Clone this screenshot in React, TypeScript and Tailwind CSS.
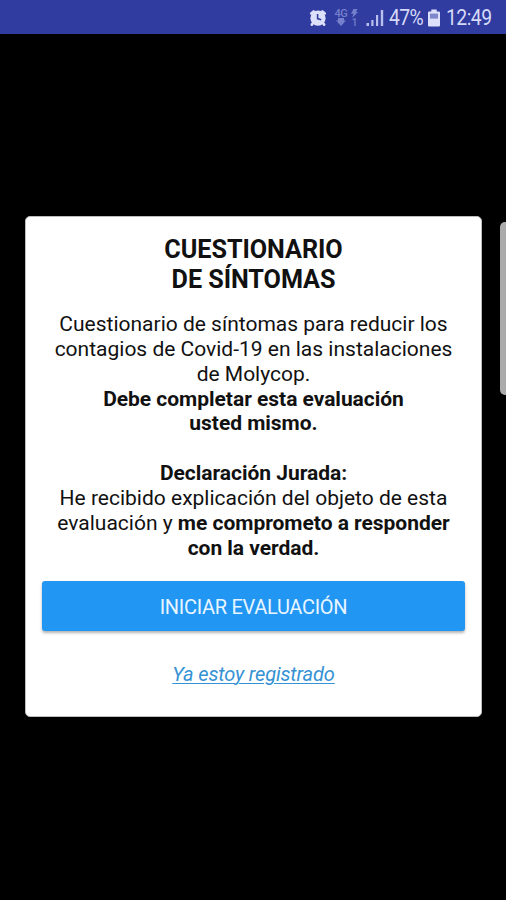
type Line = { regular?: string; bold?: string };

const INTRO: Line[] = [
  { regular: "Cuestionario de síntomas para reducir los" },
  { regular: "contagios de Covid-19 en las instalaciones" },
  { regular: "de Molycop." },
  { bold: "Debe completar esta evaluación" },
  { bold: "usted mismo." },
];

const STATEMENT: Line[] = [
  { bold: "Declaración Jurada:" },
  { regular: "He recibido explicación del objeto de esta" },
  { regular: "evaluación y ", bold: "me comprometo a responder" },
  { bold: "con la verdad." },
];

function Paragraph({ lines }: { lines: Line[] }) {
  return (
    <p className="text-[21px] leading-[24.85px] whitespace-nowrap">
      {lines.map((line, i) => (
        <span key={i} className="block">
          {line.regular}
          {line.bold && <b className="font-bold tracking-[-0.03px]">{line.bold}</b>}
        </span>
      ))}
    </p>
  );
}

function AlarmIcon() {
  return (
    <svg className="h-[18px] w-[18px]" viewBox="0 0 18 18">
      <circle cx="9" cy="9.2" r="7.6" fill="#dde0fa" />
      <path
        d="M2.2 4.4 4.6 2.4M15.8 4.4 13.4 2.4M4 14 2.8 15.6M14 14l1.2 1.6"
        stroke="#dde0fa"
        strokeWidth="2.6"
        strokeLinecap="round"
      />
      <path d="M8.6 5v4.6l3.6 1.2" fill="none" stroke="#303f9f" strokeWidth="1.6" />
    </svg>
  );
}

// 4G label with the data arrow under it, lightning and SIM slot number beside it
function NetworkIcon() {
  return (
    <span className="flex h-[18px] w-[24px] gap-[3px] text-[#7580cc]">
      <span className="flex w-[14px] flex-col items-center">
        <span className="text-[11px] leading-[9px] font-medium tracking-tight">4G</span>
        <svg className="h-[8px] w-[10px]" viewBox="0 0 10 8" fill="currentColor">
          <path d="M2 0h6v2.5h2L5 8 0 2.5h2z" />
        </svg>
      </span>
      <span className="flex w-[7px] flex-col items-center">
        <svg className="h-[9px] w-[7px]" viewBox="0 0 7 9" fill="currentColor">
          <path d="M2.5 0H6.5L5 3H7L1 9l1.5-4.2H0z" />
        </svg>
        <span className="text-[10px] leading-[9px] font-medium">1</span>
      </span>
    </span>
  );
}

function SignalIcon() {
  return (
    <svg className="h-[18px] w-[18px]" viewBox="0 0 18 18" fill="#b9c0ee">
      <rect x="0.5" y="14" width="2.5" height="3" />
      <rect x="5.3" y="11" width="2.2" height="6" />
      <rect x="10" y="6" width="2.2" height="11" />
      <rect x="14.8" y="1" width="2.4" height="16" />
    </svg>
  );
}

function BatteryIcon() {
  return (
    <svg className="h-[18px] w-[12px]" viewBox="0 0 12 18">
      <path d="M3.3 0.5h5.4v2H11q1 0 1 1V16.5q0 1-1 1H1q-1 0-1-1V3.5q0-1 1-1h2.3z" fill="#dde0fa" />
      <rect x="2" y="4.6" width="8" height="5" fill="#7d87ca" />
    </svg>
  );
}

function StatusBar() {
  return (
    <header className="flex h-[34px] items-center bg-[#303c9f] pt-px pl-[309px] text-[#d5d9f8]">
      <AlarmIcon />
      <span className="ml-[7px] flex"><NetworkIcon /></span>
      <span className="ml-2 flex"><SignalIcon /></span>
      <span className="ml-[5px] w-[34px] origin-left scale-x-[0.9] pt-px text-[21.5px] tracking-[-0.7px]">47%</span>
      <span className="ml-[5px] flex"><BatteryIcon /></span>
      <span className="ml-[6px] origin-left scale-x-[0.9] pt-px text-[21.5px] tracking-[-0.6px]">12:49</span>
    </header>
  );
}

export default function App() {
  return (
    <div className="relative flex h-[900px] w-[506px] flex-col overflow-hidden bg-black font-['Roboto',sans-serif]">
      <StatusBar />
      <main className="mr-[24px] ml-[25px] mt-[182px] flex h-[501px] flex-col rounded-[5px] border border-[#bdbdbd] bg-white px-4 pt-[18px] text-center text-[#111]">
        <h1 className="text-[25.2px] leading-[29.5px] font-bold tracking-[-0.05px]">
          CUESTIONARIO
          <br />
          DE SÍNTOMAS
        </h1>
        <div className="mt-[18.1px] flex flex-col items-center gap-[24.85px]">
          <Paragraph lines={INTRO} />
          <Paragraph lines={STATEMENT} />
        </div>
        <button className="mt-[20.3px] h-[50px] shrink-0 rounded-[3px] bg-[#2196f3] pt-[2px] text-[20px] tracking-[-0.3px] text-[#e8f5ff] shadow-[0_2px_3px_rgba(0,0,0,0.3)]">
          INICIAR EVALUACIÓN
        </button>
        <a className="mt-[31px] self-center text-[20px] leading-[24px] tracking-[-0.15px] text-[#3592d4] italic underline decoration-1 underline-offset-2">
          Ya estoy registrado
        </a>
      </main>
      {/* edge panel handle */}
      <div className="absolute top-[222px] right-0 h-[173px] w-[6px] rounded-l-[5px] bg-[#ababab]" />
    </div>
  );
}
